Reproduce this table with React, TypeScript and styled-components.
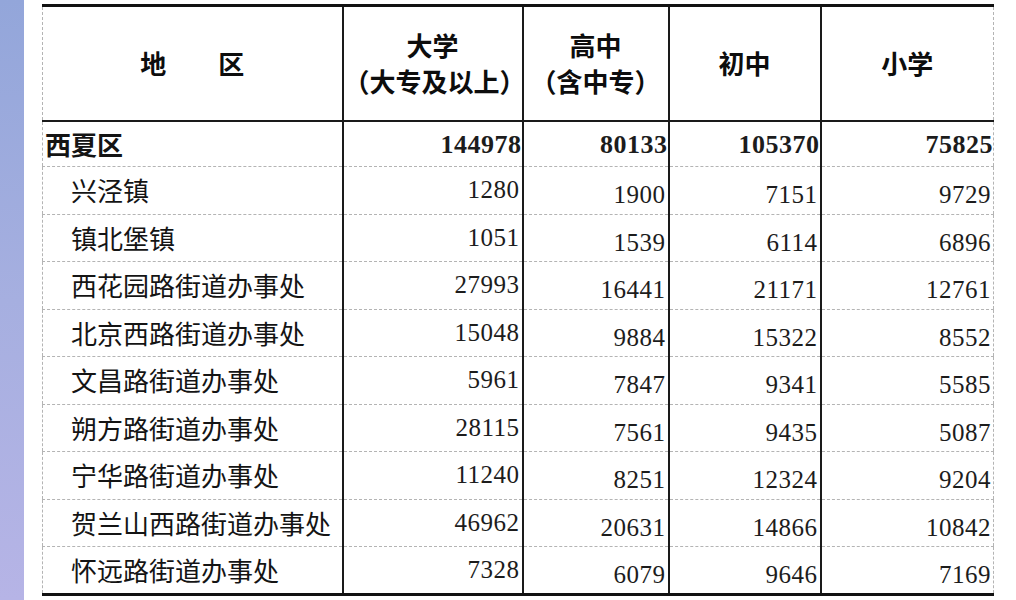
import React from "react";
import styled, { createGlobalStyle } from "styled-components";

type Row = {
  name: string;
  values: number[];
};

const total: Row = {
  name: "西夏区",
  values: [144978, 80133, 105370, 75825],
};

const rows: Row[] = [
  { name: "兴泾镇", values: [1280, 1900, 7151, 9729] },
  { name: "镇北堡镇", values: [1051, 1539, 6114, 6896] },
  { name: "西花园路街道办事处", values: [27993, 16441, 21171, 12761] },
  { name: "北京西路街道办事处", values: [15048, 9884, 15322, 8552] },
  { name: "文昌路街道办事处", values: [5961, 7847, 9341, 5585] },
  { name: "朔方路街道办事处", values: [28115, 7561, 9435, 5087] },
  { name: "宁华路街道办事处", values: [11240, 8251, 12324, 9204] },
  { name: "贺兰山西路街道办事处", values: [46962, 20631, 14866, 10842] },
  { name: "怀远路街道办事处", values: [7328, 6079, 9646, 7169] },
];

const colWidths = [300, 180, 146, 152, 173];

const App: React.FC = () => {
  return (
    <Root>
      <GlobalStyle />
      <SideBar />
      <Main>
        <Table>
          <colgroup>
            {colWidths.map((w, i) => (
              <col key={i} style={{ width: w }} />
            ))}
          </colgroup>
          <thead>
            <HeadRow>
              <HeadCell>地　　区</HeadCell>
              <HeadCell>
                大学
                <br />
                （大专及以上）
              </HeadCell>
              <HeadCell>
                高中
                <br />
                （含中专）
              </HeadCell>
              <HeadCell>初中</HeadCell>
              <HeadCell>小学</HeadCell>
            </HeadRow>
          </thead>
          <tbody>
            <TotalRow>
              <NameCell $bold>{total.name}</NameCell>
              {total.values.map((v, i) => (
                <NumCell key={i} $bold>
                  {v}
                </NumCell>
              ))}
            </TotalRow>
            {rows.map((r) => (
              <DataRow key={r.name}>
                <NameCell $indent>{r.name}</NameCell>
                {r.values.map((v, i) => (
                  <NumCell key={i} $low={i > 0}>
                    {v}
                  </NumCell>
                ))}
              </DataRow>
            ))}
          </tbody>
        </Table>
      </Main>
    </Root>
  );
};

export default App;

const GlobalStyle = createGlobalStyle`
  html, body {
    margin: 0;
    padding: 0;
    background: #ffffff;
  }
  body {
    font-family: "Noto Sans CJK SC", "Liberation Serif", serif;
    color: #111;
  }
`;

const Root = styled.div`
  display: flex;
  width: 1016px;
  height: 600px;
  overflow: hidden;
  background: #ffffff;
`;

const SideBar = styled.div`
  width: 24px;
  flex-shrink: 0;
  background: linear-gradient(180deg, #93a6da 0%, #a6afe0 50%, #b6b4e6 100%);
`;

const Main = styled.div`
  padding: 4px 0 0 18px;
`;

const Table = styled.table`
  width: 951px;
  table-layout: fixed;
  border-collapse: collapse;
  border-top: 3px solid #111;
  border-bottom: 3px solid #111;
  border-left: 1px dashed #b4b4b4;
  border-right: 1px dashed #b4b4b4;

  td + td,
  th + th {
    border-left: 2px solid #1a1a1a;
  }
`;

const HeadRow = styled.tr`
  height: 115px;
  border-bottom: 2px solid #1a1a1a;
`;

const HeadCell = styled.th`
  padding: 0;
  font-family: "Noto Sans CJK SC", sans-serif;
  font-size: 26px;
  font-weight: 700;
  line-height: 36px;
  text-align: center;
  vertical-align: middle;
  white-space: nowrap;
  color: #0d0d0d;
`;

const TotalRow = styled.tr`
  height: 46px;
  border-bottom: 1px dashed #b4b4b4;
`;

const DataRow = styled.tr`
  height: 47.5px;
  border-bottom: 1px dashed #b4b4b4;

  &:last-child {
    border-bottom: 3px solid #111;
  }
`;

const NameCell = styled.td<{ $bold?: boolean; $indent?: boolean }>`
  padding: 0 0 0 ${({ $indent }) => ($indent ? "28px" : "2px")};
  font-family: "Noto Sans CJK SC", sans-serif;
  font-size: 26px;
  font-weight: ${({ $bold }) => ($bold ? 700 : 400)};
  line-height: 30px;
  text-align: left;
  vertical-align: middle;
  white-space: nowrap;
  color: #141414;
`;

const NumCell = styled.td<{ $bold?: boolean; $low?: boolean }>`
  padding: ${({ $low, $bold }) =>
    $low ? "10px 2px 0 0" : $bold ? "2px 0 0 0" : "0 2px 0 0"};
  font-family: "Liberation Serif", "DejaVu Serif", serif;
  font-size: ${({ $bold }) => ($bold ? "26px" : "25px")};
  font-weight: ${({ $bold }) => ($bold ? 700 : 400)};
  letter-spacing: 0.5px;
  line-height: 28px;
  text-align: right;
  vertical-align: middle;
  white-space: nowrap;
  color: #1c1c1c;
`;
